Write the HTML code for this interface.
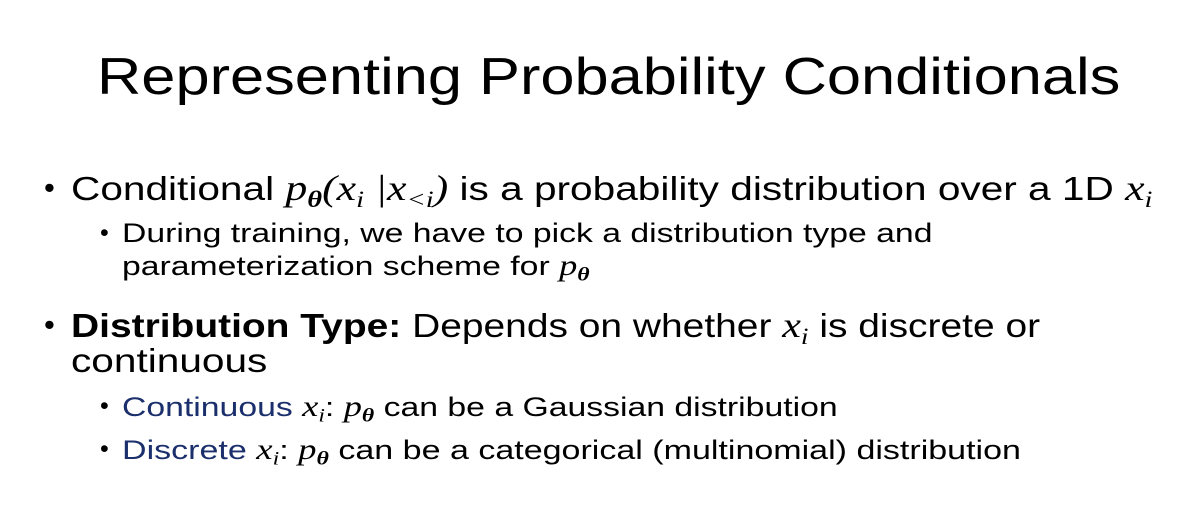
<!DOCTYPE html>
<html><head><meta charset="utf-8"><style>
body{margin:0;width:1204px;height:526px;background:#fff;position:relative;overflow:hidden;font-family:"Liberation Sans",Arial,sans-serif;color:#000}
.l{position:absolute;white-space:nowrap;line-height:1;transform-origin:0 0}
.m{font-family:"Liberation Serif",serif;font-style:italic;font-size:108%}
sub{font-size:65%;vertical-align:-0.3em;line-height:0}
.b{color:#1a2f6b}
.t{left:97px;font-size:52px;top:51px;transform:scaleX(1.18)}
.a{font-size:33px;transform:scaleX(1.23)}
.s{font-size:27px;transform:scaleX(1.25)}
.d{position:absolute;line-height:1}
</style></head><body>
<div class="l t">Representing Probability Conditionals</div>
<div class="d" style="left:44px;top:172px;font-size:31px">•</div>
<div class="l a" style="left:71px;top:171px">Conditional <span class="m">p<sub><b>θ</b></sub>(x<sub>i</sub> |x<sub>&lt;i</sub>)</span> is a probability distribution over a 1D <span class="m">x<sub>i</sub></span></div>
<div class="d" style="left:100px;top:221px;font-size:25px">•</div>
<div class="l s" style="left:122px;top:220px">During training, we have to pick a distribution type and</div>
<div class="l s" style="left:122px;top:252px">parameterization scheme for <span class="m">p<sub><b>θ</b></sub></span></div>
<div class="d" style="left:44px;top:309px;font-size:31px">•</div>
<div class="l a" style="left:71px;top:308px;transform:scaleX(1.18)"><b>Distribution Type:</b> Depends on whether <span class="m">x<sub>i</sub></span> is discrete or</div>
<div class="l a" style="left:71px;top:344px">continuous</div>
<div class="d" style="left:100px;top:394px;font-size:25px">•</div>
<div class="l s" style="left:122px;top:393px"><span class="b">Continuous</span> <span class="m">x<sub>i</sub></span>: <span class="m">p<sub><b>θ</b></sub></span> can be a Gaussian distribution</div>
<div class="d" style="left:100px;top:437px;font-size:25px">•</div>
<div class="l s" style="left:122px;top:436px;transform:scaleX(1.26)"><span class="b">Discrete</span> <span class="m">x<sub>i</sub></span>: <span class="m">p<sub><b>θ</b></sub></span> can be a categorical (multinomial) distribution</div>
</body></html>
